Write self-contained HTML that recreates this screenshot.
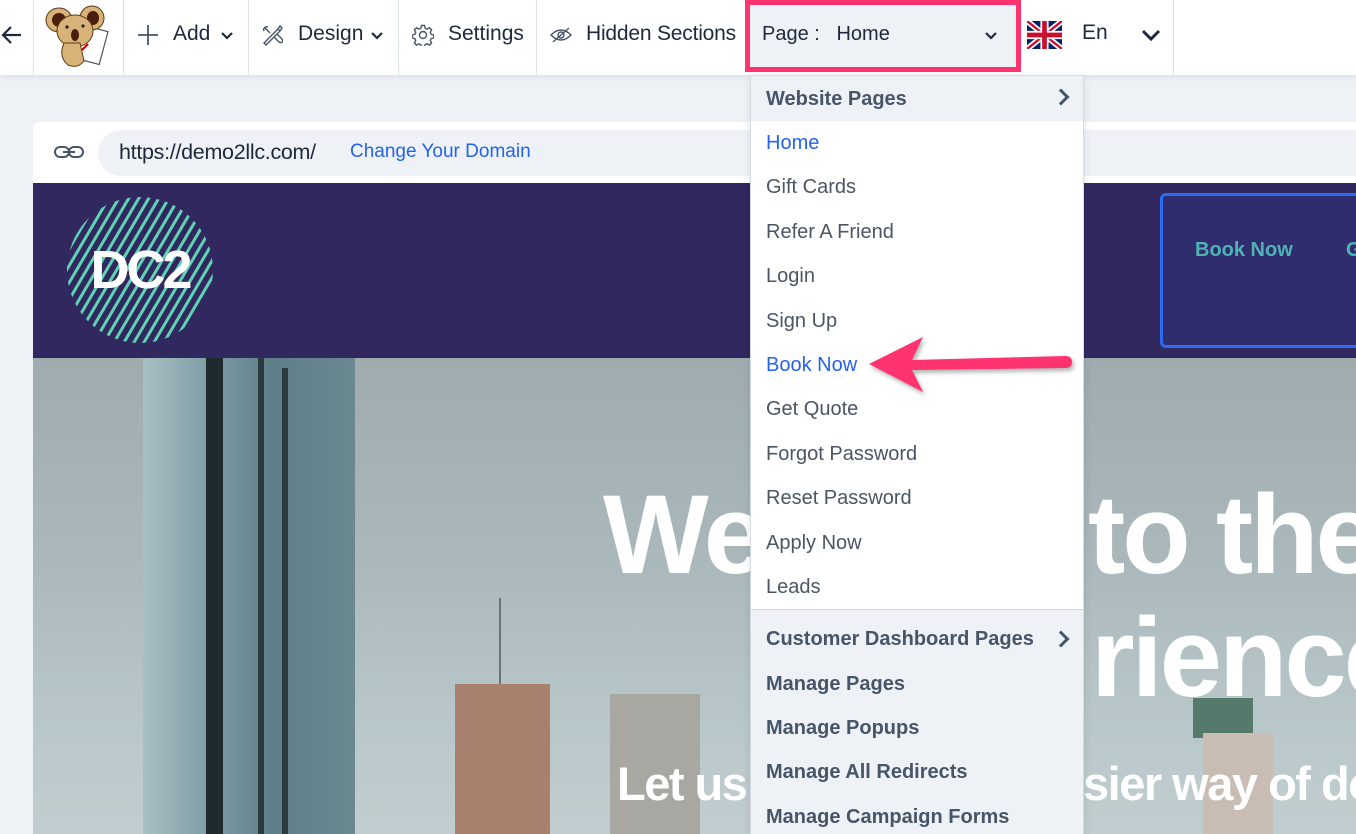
<!DOCTYPE html>
<html><head><meta charset="utf-8"><style>
*{box-sizing:border-box;margin:0;padding:0}
html,body{width:1356px;height:834px;overflow:hidden}
body{background:#eef2f6;font-family:"Liberation Sans",sans-serif;position:relative;color:#1e293b}
.top{position:absolute;left:0;top:0;width:1356px;height:75px;background:#fff;box-shadow:0 2px 6px rgba(0,0,0,.08);z-index:5}
.sep{position:absolute;top:0;width:1px;height:75px;background:#dde2e8}
.ti{position:absolute;top:22px;font-size:21px;color:#1e293b;white-space:nowrap}
.card{position:absolute;left:33px;top:122px;width:1330px;height:712px;background:#fff;border-radius:6px 0 0 0;overflow:hidden}
.pill{position:absolute;left:65px;top:8px;width:1300px;height:46px;background:#eef2f6;border-radius:23px}
.hdr{position:absolute;left:0;top:61px;width:1330px;height:175px;background:#30285f}
.hero{position:absolute;left:0;top:236px;width:1330px;height:500px;background:linear-gradient(180deg,#9fabae 0%,#aab8bb 40%,#b9c8cb 75%,#c3cfd1 100%);overflow:hidden}
.big{position:absolute;color:#fff;font-weight:bold;font-size:112px;letter-spacing:-3px;white-space:nowrap}
.mid{position:absolute;color:#fff;font-weight:bold;font-size:47px;letter-spacing:-1.5px;white-space:nowrap}
.dd{position:absolute;left:750px;top:75px;width:334px;height:770px;background:#fff;border:1px solid #d5dbe2;z-index:6;box-shadow:0 2px 8px rgba(0,0,0,.1)}
.dd .h{height:45px;background:#eef2f6;font-weight:bold;color:#475569;font-size:20px;padding:12px 15px;position:relative}
.dd .i{height:44.4px;font-size:20px;color:#4b5563;padding:11px 15px}
.dd .b{color:#2563eb}
.dd .sec{background:#eef2f6;border-top:1px solid #cfd6de;padding-top:8px}
.dd .s{height:44.4px;font-size:20px;font-weight:bold;color:#475569;padding:10px 15px;position:relative}
.chev{position:absolute;right:16px;top:15px;width:12px;height:12px;border-right:3px solid #475569;border-top:3px solid #475569;transform:rotate(45deg)}
</style></head><body>
<div class="top">
  <svg style="position:absolute;left:0;top:24px" width="24" height="22" viewBox="0 0 24 22"><path d="M21 11H3M11 3L3 11l8 8" fill="none" stroke="#1e293b" stroke-width="2.2"/></svg>
  <div class="sep" style="left:33px"></div>
  <svg style="position:absolute;left:42px;top:3px" width="70" height="66" viewBox="0 0 70 66">
    <rect x="38" y="25" width="24" height="34" fill="#fff" stroke="#555" stroke-width="1.2" transform="rotate(15 50 42)"/>
    <ellipse cx="17" cy="17" rx="13" ry="12" fill="#d8b276" stroke="#5a3a1a"/><ellipse cx="17" cy="17" rx="7" ry="7" fill="#4a1e0f"/>
    <ellipse cx="50" cy="15" rx="12" ry="12" fill="#d8b276" stroke="#5a3a1a"/><ellipse cx="51" cy="15" rx="6" ry="7" fill="#4a1e0f"/>
    <ellipse cx="33" cy="28" rx="18" ry="16" fill="#d8b276" stroke="#5a3a1a"/>
    <path d="M22 40 q-6 14 4 22 q10 4 16 -4 l-4 -18z" fill="#d8b276" stroke="#5a3a1a"/>
    <ellipse cx="33" cy="32" rx="4" ry="6" fill="#4a1e0f"/><circle cx="25" cy="24" r="1.6" fill="#222"/><circle cx="41" cy="23" r="1.6" fill="#222"/>
    <path d="M40 47l6 -6" stroke="#c00" stroke-width="2"/>
  </svg>
  <div class="sep" style="left:123px"></div>
  <svg style="position:absolute;left:137px;top:24px" width="22" height="22" viewBox="0 0 22 22"><path d="M11 1v20M1 11h20" stroke="#475569" stroke-width="1.8"/></svg>
  <div class="ti" style="left:173px">Add</div>
  <svg style="position:absolute;left:220px;top:31px" width="14" height="10" viewBox="0 0 14 10"><path d="M2 2l5 5 5-5" fill="none" stroke="#1e293b" stroke-width="2.2"/></svg>
  <div class="sep" style="left:248px"></div>
  <svg style="position:absolute;left:261px;top:24px" width="22" height="22" viewBox="0 0 22 22" fill="none" stroke="#475569" stroke-width="1.4"><path d="M3 19L17 5l2 2L5 21zM17 5l2-3 2 2-2 3"/><path d="M4 4l5 5M3 7a3 3 0 0 1 4-4M13 13l5 5a2 2 0 0 0 3-3l-5-5"/></svg>
  <div class="ti" style="left:298px">Design</div>
  <svg style="position:absolute;left:370px;top:31px" width="14" height="10" viewBox="0 0 14 10"><path d="M2 2l5 5 5-5" fill="none" stroke="#1e293b" stroke-width="2.2"/></svg>
  <div class="sep" style="left:398px"></div>
  <svg style="position:absolute;left:412px;top:24px" width="22" height="22" viewBox="0 0 22 22" fill="none" stroke="#475569" stroke-width="1.4"><circle cx="11" cy="11" r="3.5"/><path d="M9.5 1.5h3l.6 2.6 2 1 2.4-1.3 2.1 2.1-1.3 2.4.9 2 2.6.7v3l-2.6.6-.9 2 1.3 2.4-2.1 2.1-2.4-1.3-2 .9-.6 2.6h-3l-.6-2.6-2-.9-2.4 1.3-2.1-2.1 1.3-2.4-.9-2-2.6-.6v-3l2.6-.7.9-2-1.3-2.4 2.1-2.1 2.4 1.3 2-1z"/></svg>
  <div class="ti" style="left:448px">Settings</div>
  <div class="sep" style="left:536px"></div>
  <svg style="position:absolute;left:549px;top:25px" width="24" height="20" viewBox="0 0 24 20" fill="none" stroke="#475569" stroke-width="1.4"><path d="M2 10q10-10 20 0q-10 10-20 0z"/><circle cx="12" cy="10" r="3"/><path d="M4 17L20 3"/></svg>
  <div class="ti" style="left:586px;letter-spacing:-0.2px">Hidden Sections</div>
  <div style="position:absolute;left:745px;top:0;width:276px;height:72px;border:5px solid #ff3370;background:#eef2f6"></div>
  <div class="ti" style="left:762px;font-size:20px;top:23px">Page :&nbsp;&nbsp; Home</div>
  <svg style="position:absolute;left:984px;top:31px" width="14" height="10" viewBox="0 0 14 10"><path d="M2 2l5 5 5-5" fill="none" stroke="#1e293b" stroke-width="2.2"/></svg>
  <svg style="position:absolute;left:1027px;top:21px" width="35" height="28" viewBox="0 0 60 48"><rect width="60" height="48" fill="#012169"/><path d="M0 0L60 48M60 0L0 48" stroke="#fff" stroke-width="10"/><path d="M0 0L60 48M60 0L0 48" stroke="#C8102E" stroke-width="4"/><path d="M30 0v48M0 24h60" stroke="#fff" stroke-width="14"/><path d="M30 0v48M0 24h60" stroke="#C8102E" stroke-width="8"/></svg>
  <div class="ti" style="left:1082px;top:21px">En</div>
  <svg style="position:absolute;left:1140px;top:28px" width="22" height="14" viewBox="0 0 22 14"><path d="M3 3l8 8 8-8" fill="none" stroke="#1e293b" stroke-width="3"/></svg>
  <div class="sep" style="left:1173px"></div>
</div>

<div class="card">
  <svg style="position:absolute;left:21px;top:22px" width="30" height="16" viewBox="0 0 30 16" fill="none" stroke="#475569" stroke-width="2"><rect x="1" y="3" width="14" height="10" rx="5"/><rect x="15" y="3" width="14" height="10" rx="5"/><path d="M9 8h12"/></svg>
  <div class="pill"></div>
  <div style="position:absolute;left:86px;top:18px;font-size:21.5px;color:#1e293b;letter-spacing:-0.3px">https://demo2llc.com/</div>
  <div style="position:absolute;left:317px;top:19px;font-size:19px;color:#2563eb">Change Your Domain</div>
  <div class="hdr">
    <svg style="position:absolute;left:33px;top:13px" width="148" height="148" viewBox="0 0 148 148">
      <defs><clipPath id="c"><circle cx="74" cy="74" r="73"/></clipPath></defs>
      <g clip-path="url(#c)" stroke="#5fd3b3" stroke-width="3">
        <path d="M-100 160L0 -10M-90 160L10 -10M-80 160L20 -10M-70 160L30 -10M-60 160L40 -10M-50 160L50 -10M-40 160L60 -10M-30 160L70 -10M-20 160L80 -10M-10 160L90 -10M0 160L100 -10M10 160L110 -10M20 160L120 -10M30 160L130 -10M40 160L140 -10M50 160L150 -10M60 160L160 -10M70 160L170 -10M80 160L180 -10M90 160L190 -10M100 160L200 -10M110 160L210 -10M120 160L220 -10M130 160L230 -10M140 160L240 -10"/>
      </g>
      <text x="74" y="92" text-anchor="middle" font-family="Liberation Sans" font-weight="bold" font-size="54" fill="#fff" letter-spacing="-3">DC2</text>
    </svg>
    <div style="position:absolute;left:1127px;top:10px;width:220px;height:155px;border:3px solid #2f6bf0;border-radius:6px;background:#302d6e"></div>
    <div style="position:absolute;left:1162px;top:56px;font-size:20px;font-weight:bold;color:#4fb3b5">Book Now</div>
    <div style="position:absolute;left:1313px;top:56px;font-size:20px;font-weight:bold;color:#4fb3b5">G</div>
  </div>
  <div class="hero">
    <div style="position:absolute;left:110px;top:0;width:212px;height:500px;background:linear-gradient(90deg,#a9bfc3 0%,#7f9ea6 30%,#5f7f88 60%,#6a8890 100%)"></div>
    <div style="position:absolute;left:173px;top:0;width:17px;height:500px;background:#1e2a2e"></div>
    <div style="position:absolute;left:225px;top:0;width:6px;height:500px;background:#2a3a40"></div>
    <div style="position:absolute;left:249px;top:10px;width:6px;height:490px;background:#2a3a40"></div>
    <div style="position:absolute;left:466px;top:240px;width:2px;height:100px;background:#6a7277"></div>
    <div style="position:absolute;left:422px;top:326px;width:95px;height:180px;background:#a8806e"></div>
    <div style="position:absolute;left:577px;top:336px;width:90px;height:170px;background:#a9a7a2"></div>
    <div style="position:absolute;left:1160px;top:340px;width:60px;height:40px;background:#557a6c"></div>
    <div style="position:absolute;left:1170px;top:375px;width:70px;height:130px;background:#c9bdb3"></div>
    <div class="big" style="left:570px;top:112px">We</div>
    <div class="big" style="left:1055px;top:112px">to the</div>
    <div class="big" style="left:1058px;top:235px">rience</div>
    <div class="mid" style="left:584px;top:398px">Let us</div>
    <div class="mid" style="left:1050px;top:398px">sier way of do</div>
  </div>
</div>

<div class="dd">
  <div class="h">Website Pages<span class="chev"></span></div>
  <div class="i b">Home</div>
  <div class="i">Gift Cards</div>
  <div class="i">Refer A Friend</div>
  <div class="i">Login</div>
  <div class="i">Sign Up</div>
  <div class="i b">Book Now</div>
  <div class="i">Get Quote</div>
  <div class="i">Forgot Password</div>
  <div class="i">Reset Password</div>
  <div class="i">Apply Now</div>
  <div class="i">Leads</div>
  <div class="sec">
    <div class="s">Customer Dashboard Pages<span class="chev" style="top:15px"></span></div>
    <div class="s">Manage Pages</div>
    <div class="s">Manage Popups</div>
    <div class="s">Manage All Redirects</div>
    <div class="s">Manage Campaign Forms</div>
  </div>
</div>

<svg style="position:absolute;left:860px;top:330px;z-index:7;filter:drop-shadow(2px 3px 2px rgba(0,0,0,.3))" width="220" height="70" viewBox="0 0 220 70">
  <path d="M9 34L63 7L52 30L205 26Q212 26 212 32Q212 38 205 38L52 40L63 62Z" fill="#ff3370"/>
</svg>
</body></html>
